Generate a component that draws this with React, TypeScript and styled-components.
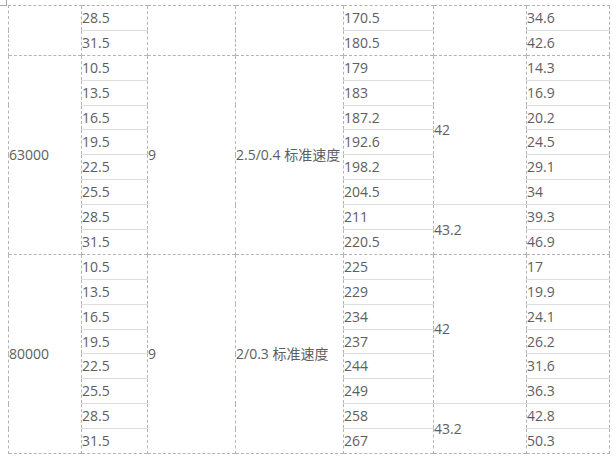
import styled, { createGlobalStyle } from "styled-components";

const GlobalStyle = createGlobalStyle`
  html, body {
    margin: 0;
    padding: 0;
    background: #ffffff;
  }
`;

const Page = styled.div`
  position: relative;
  padding: 5px 0 0 8px;
  font-family: "Open Sans", "Noto Sans CJK SC", sans-serif;
  font-size: 14px;
  color: #5e5e5e;
`;

// 左上角的小标记
const CornerMark = styled.span`
  position: absolute;
  left: 0;
  top: 0;
  width: 6px;
  height: 5px;
  border-right: 1px solid #a8a8a8;
  border-bottom: 1px solid #a8a8a8;
`;

const Table = styled.table`
  border-collapse: collapse;
  table-layout: fixed;
  width: 602px;
  border-right: 1px dashed #b4b4b4;
  border-bottom: 1px dashed #b4b4b4;
`;

const Cell = styled.td<{ $groupStart?: boolean }>`
  box-sizing: border-box;
  height: 24.9px;
  padding: 0;
  vertical-align: middle;
  white-space: nowrap;
  line-height: 18px;
  border-left: 1px dashed #b4b4b4;
  border-top: 1px ${(p) => (p.$groupStart ? "dashed #b4b4b4" : "solid #dedede")};
`;

const widths = [73, 66, 88, 108, 90, 93, 83];

const diameters = ["10.5", "13.5", "16.5", "19.5", "22.5", "25.5", "28.5", "31.5"];

type Group = {
  force: string;
  stroke: string;
  speed: string;
  weights: string[];
  extra: string[];
};

const groups: Group[] = [
  {
    force: "63000",
    stroke: "9",
    speed: "2.5/0.4 标准速度",
    weights: ["179", "183", "187.2", "192.6", "198.2", "204.5", "211", "220.5"],
    extra: ["14.3", "16.9", "20.2", "24.5", "29.1", "34", "39.3", "46.9"],
  },
  {
    force: "80000",
    stroke: "9",
    speed: "2/0.3 标准速度",
    weights: ["225", "229", "234", "237", "244", "249", "258", "267"],
    extra: ["17", "19.9", "24.1", "26.2", "31.6", "36.3", "42.8", "50.3"],
  },
];

function GroupRows({ g }: { g: Group }) {
  return (
    <>
      {diameters.map((d, i) => (
        <tr key={d}>
          {i === 0 && <Cell $groupStart rowSpan={8}>{g.force}</Cell>}
          <Cell $groupStart={i === 0}>{d}</Cell>
          {i === 0 && (
            <>
              <Cell $groupStart rowSpan={8}>{g.stroke}</Cell>
              <Cell $groupStart rowSpan={8}>{g.speed}</Cell>
            </>
          )}
          <Cell $groupStart={i === 0}>{g.weights[i]}</Cell>
          {i === 0 && <Cell $groupStart rowSpan={6}>42</Cell>}
          {i === 6 && <Cell rowSpan={2}>43.2</Cell>}
          <Cell $groupStart={i === 0}>{g.extra[i]}</Cell>
        </tr>
      ))}
    </>
  );
}

export default function App() {
  return (
    <>
      <GlobalStyle />
      <Page>
        <CornerMark />
        <Table>
          <colgroup>
            {widths.map((w, i) => (
              <col key={i} style={{ width: w }} />
            ))}
          </colgroup>
          <tbody>
            <tr>
              <Cell $groupStart rowSpan={2} />
              <Cell $groupStart>28.5</Cell>
              <Cell $groupStart rowSpan={2} />
              <Cell $groupStart rowSpan={2} />
              <Cell $groupStart>170.5</Cell>
              <Cell $groupStart rowSpan={2} />
              <Cell $groupStart>34.6</Cell>
            </tr>
            <tr>
              <Cell>31.5</Cell>
              <Cell>180.5</Cell>
              <Cell>42.6</Cell>
            </tr>
            {groups.map((g) => (
              <GroupRows key={g.force} g={g} />
            ))}
          </tbody>
        </Table>
      </Page>
    </>
  );
}
